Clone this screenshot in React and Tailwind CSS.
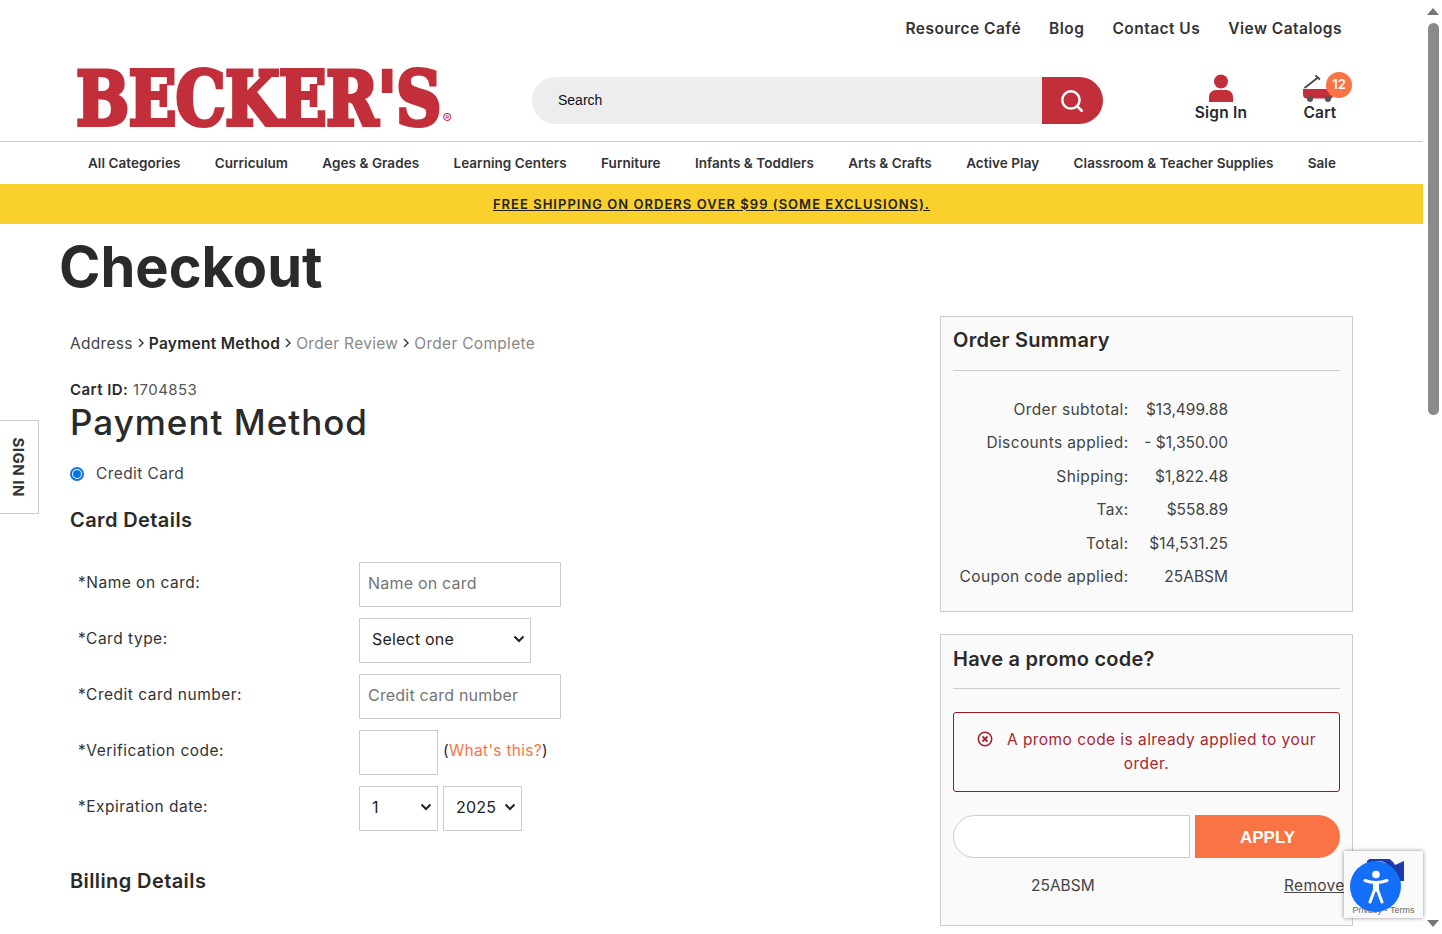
import React from "react";
import { Search } from "lucide-react";

const navItems = [
  "All Categories",
  "Curriculum",
  "Ages & Grades",
  "Learning Centers",
  "Furniture",
  "Infants & Toddlers",
  "Arts & Crafts",
  "Active Play",
  "Classroom & Teacher Supplies",
  "Sale",
];

const summary = [
  ["Order subtotal:", "$13,499.88"],
  ["Discounts applied:", "- $1,350.00"],
  ["Shipping:", "$1,822.48"],
  ["Tax:", "$558.89"],
  ["Total:", "$14,531.25"],
  ["Coupon code applied:", "25ABSM"],
];

const fieldClass =
  "h-[44.5px] border border-[#ccc] bg-white pb-[2px] text-[16px] tracking-[0.2px] text-[#222] font-['Inter',sans-serif]";

function Chevron() {
  return (
    <svg width="8" height="10" viewBox="0 0 8 10" className="mx-[4px] mb-[3px] inline-block">
      <path d="M2 1l4 4-4 4" fill="none" stroke="#333" strokeWidth="1.4" />
    </svg>
  );
}

function PersonIcon() {
  return (
    <svg width="26" height="28" viewBox="0 0 26 28">
      <circle cx="13" cy="7.5" r="7" fill="#c22f3a" />
      <path d="M1 28v-5c0-4 3-7 7-7h10c4 0 7 3 7 7v5z" fill="#c22f3a" />
    </svg>
  );
}

function WagonIcon() {
  return (
    <svg width="34" height="30" viewBox="0 0 34 30">
      <path d="M1.500 14L15 3.500" stroke="#444" strokeWidth="1.8" fill="none" />
      <path d="M12.500 1.500l4.500 4" stroke="#444" strokeWidth="1.8" fill="none" />
      <path d="M0 15h30v7c0 1.500-1 2.500-2 2.500H4c-2.500 0-4-1.500-4-4z" fill="#c22f3a" />
      <circle cx="7" cy="25" r="3" fill="#555" />
      <circle cx="25" cy="25" r="3" fill="#555" />
    </svg>
  );
}

function FormRow({ label, children }) {
  return (
    <div className="flex h-[56px] items-start">
      <label className="w-[289px] pl-2 pt-[9px] text-[15.5px] tracking-[0.5px] text-[#333]">{label}</label>
      <div className="flex items-center gap-[5px]">{children}</div>
    </div>
  );
}

function Select({ value, className }) {
  return (
    <div className={`${fieldClass} flex items-center justify-between pl-3 pr-[5px] ${className}`}>
      <span>{value}</span>
      <svg width="12" height="8" viewBox="0 0 12 8">
        <path d="M1.500 1.500L6 6l4.500-4.500" fill="none" stroke="#222" strokeWidth="2" />
      </svg>
    </div>
  );
}

export default function App() {
  return (
    <div className="relative flex h-[934px] w-[1442px] overflow-hidden bg-white font-['Inter',sans-serif] text-[#2a2a2a]">
      <main className="h-full w-[1423px] shrink-0 overflow-hidden">
        {/* TOP LINKS */}
        <div className="flex h-[60px] items-start justify-end gap-7 pr-[81px] pt-[20px] text-[15.5px] font-semibold leading-[18px] tracking-[0.47px] text-[#333]">
          <a>Resource Café</a>
          <a>Blog</a>
          <a>Contact Us</a>
          <a>View Catalogs</a>
        </div>

        {/* HEADER */}
        <div className="flex h-[82px] items-start border-b border-[#ccc]">
          <div className="relative ml-[76px] h-[72px] w-[376px] shrink-0">
            <span className="block w-[363px] origin-top-left scale-x-[0.84] whitespace-nowrap pt-[3px] font-['DejaVu_Serif',serif] text-[75px] font-bold leading-[73px] tracking-[-1px] text-[#c22f3a] [-webkit-text-stroke:4px_#c22f3a]">
              BECKER'S
            </span>
            <span className="absolute bottom-[6px] right-0 text-[14px] font-normal leading-none text-[#c22f3a]">®</span>
          </div>
          <div className="ml-[80px] mt-[17px] flex h-[47px] w-[571px] shrink-0">
            <div className="flex flex-1 items-center rounded-l-full bg-[#ededed] pl-[26px] font-['Liberation_Sans',sans-serif] text-[14px] text-[#111]">
              Search
            </div>
            <div className="flex w-[61px] items-center justify-center rounded-r-full bg-[#c22f3a] pr-[1px]">
              <Search size={26} strokeWidth={2.3} color="#fff" />
            </div>
          </div>
          <div className="ml-[89px] mt-[14px] flex w-[58px] flex-col items-center">
            <PersonIcon />
            <span className="mt-[1px] whitespace-nowrap text-[15.5px] font-semibold leading-[20px] tracking-[0.2px]">Sign In</span>
          </div>
          <div className="relative ml-[40px] mt-[14px] flex w-[60px] flex-col items-center">
            <div className="h-[29px] w-[60px] pl-[13px]">
              <WagonIcon />
            </div>
            <span className="text-[15.5px] font-semibold leading-[20px] tracking-[0.2px]">Cart</span>
            <span className="absolute -top-[2px] left-[36px] flex h-[26px] w-[26px] items-center justify-center rounded-full bg-[#f97344] text-[13px] font-semibold text-white">
              12
            </span>
          </div>
        </div>

        {/* NAV */}
        <nav className="flex h-[42px] items-center justify-between pl-[88px] pr-[87px] text-[13.5px] font-semibold tracking-[0.05px] text-[#333]">
          {navItems.map((item) => (
            <a key={item}>{item}</a>
          ))}
        </nav>

        {/* PROMO BAR */}
        <div className="flex h-[40px] items-center justify-center bg-[#fad02c] pt-[1px] text-[13px] font-semibold tracking-[1.02px] text-[#222] underline">
          FREE SHIPPING ON ORDERS OVER $99 (SOME EXCLUSIONS).
        </div>

        <h1 className="pl-[59px] pt-[9px] text-[56px] font-bold leading-[68px] text-[#2a2a2a]">Checkout</h1>

        <div className="flex pt-[15px]">
          {/* LEFT */}
          <div className="w-[940px] shrink-0 pl-[70px]">
            <div className="pt-[18px] text-[15.5px] leading-5 tracking-[0.3px]">
              <span className="text-[#444]">Address</span>
              <Chevron />
              <span className="font-semibold">Payment Method</span>
              <Chevron />
              <span className="text-[#888]">Order Review</span>
              <Chevron />
              <span className="text-[#888]">Order Complete</span>
            </div>
            <div className="mt-[26px] text-[15px] leading-5 tracking-[0.45px]">
              <b className="font-semibold">Cart ID:</b> <span className="text-[#555]">1704853</span>
            </div>
            <h2 className="mt-[2px] text-[35px] font-medium leading-[40px] tracking-[1px]">Payment Method</h2>
            <div className="mt-[22px] flex h-5 items-center text-[15.5px] tracking-[0.4px] text-[#444]">
              <span className="flex h-[14px] w-[14px] items-center justify-center rounded-full border-2 border-[#0b74e5] bg-white">
                <span className="h-[8px] w-[8px] rounded-full bg-[#0b74e5]" />
              </span>
              <span className="ml-[12px]">Credit Card</span>
            </div>
            <h3 className="mt-[24px] text-[20px] font-semibold leading-6 tracking-[0.4px]">Card Details</h3>

            <div className="mt-[30px]">
              <FormRow label="*Name on card:">
                <div className={`${fieldClass} flex w-[202px] items-center pl-2 text-[#757575]`}>Name on card</div>
              </FormRow>
              <FormRow label="*Card type:">
                <Select value="Select one" className="w-[172px]" />
              </FormRow>
              <FormRow label="*Credit card number:">
                <div className={`${fieldClass} flex w-[202px] items-center pl-2 text-[#757575]`}>Credit card number</div>
              </FormRow>
              <FormRow label="*Verification code:">
                <div className={`${fieldClass} w-[79px]`} />
                <span className="mb-[3px] text-[15.5px] tracking-[0.3px]">
                  (<span className="text-[#f97344]">What's this?</span>)
                </span>
              </FormRow>
              <FormRow label="*Expiration date:">
                <Select value="1" className="w-[79px]" />
                <Select value="2025" className="w-[79px]" />
              </FormRow>
            </div>

            <h3 className="mt-[27px] text-[20px] font-semibold leading-6 tracking-[0.4px]">Billing Details</h3>
          </div>

          {/* RIGHT */}
          <div className="w-[413px] shrink-0">
            <section className="h-[296px] border border-[#ccc] bg-[#fafafa] px-3">
              <h3 className="border-b border-[#ccc] pb-[18px] pt-[11px] text-[20px] font-semibold leading-6 tracking-[0.3px]">Order Summary</h3>
              <div className="pt-[22px]">
                {summary.map(([label, value]) => (
                  <div key={label} className="flex h-[33.4px] items-center text-[15.5px] text-[#444]">
                    <span className="w-[175.5px] whitespace-nowrap text-right tracking-[0.38px]">{label}</span>
                    <span className="w-[99.5px] whitespace-nowrap text-right">{value}</span>
                  </div>
                ))}
              </div>
            </section>

            <section className="mt-[22px] h-[292px] border border-[#ccc] bg-[#fafafa] px-3">
              <h3 className="border-b border-[#ccc] pb-[17px] pt-[12px] text-[20px] font-semibold leading-6 tracking-[0.25px]">Have a promo code?</h3>
              <div className="mt-[23px] flex h-[80px] flex-col items-center justify-center rounded-[3px] border border-[#a01520] px-2 text-center text-[15.5px] leading-[24px] tracking-[0.44px] text-[#a82632]">
                <div className="whitespace-nowrap">
                  <svg width="16" height="16" viewBox="0 0 16 16" className="mb-[3px] mr-[14px] inline-block">
                    <circle cx="8" cy="8" r="6.700" fill="none" stroke="#a82632" strokeWidth="1.600" />
                    <path d="M5.500 5.500l5 5M10.500 5.500l-5 5" stroke="#a82632" strokeWidth="1.800" />
                  </svg>
                  A promo code is already applied to your
                </div>
                <div>order.</div>
              </div>
              <div className="mt-[23px] flex h-[43px] gap-[5px]">
                <div className="w-[237px] rounded-l-full border border-[#ccc] bg-white" />
                <button className="w-[145px] rounded-r-full bg-[#f97344] pt-[2px] font-['Liberation_Sans',sans-serif] text-[17px] font-bold text-white">
                  APPLY
                </button>
              </div>
              <div className="mt-[18px] flex h-[20px] items-center text-[15.5px] text-[#444]">
                <span className="w-[331px] shrink-0 pl-[78px]">25ABSM</span>
                <span className="shrink-0 underline tracking-[0.3px]">Remove</span>
              </div>
            </section>
          </div>
        </div>
      </main>

      {/* SCROLLBAR */}
      <aside className="flex h-full w-[19px] shrink-0 flex-col items-center bg-white">
        <svg width="12" height="7" viewBox="0 0 12 7" className="mt-[8px]">
          <path d="M6 0l6 7H0z" fill="#777" />
        </svg>
        <div className="ml-[1px] mt-[8px] h-[392px] w-[11px] rounded-full bg-[#8a8a8a]" />
        <svg width="12" height="7" viewBox="0 0 12 7" className="mt-auto mb-[7px]">
          <path d="M6 7l6-7H0z" fill="#777" />
        </svg>
      </aside>

      {/* SIGN IN TAB */}
      <div className="absolute left-0 top-[420px] flex h-[94px] w-[39px] items-center justify-center border border-l-0 border-[#ccc] bg-white pr-[2px]">
        <span className="rotate-90 whitespace-nowrap text-[15px] font-bold tracking-[0.5px] text-[#333]">SIGN IN</span>
      </div>

      {/* RECAPTCHA + ACCESSIBILITY */}
      <div className="absolute left-[1344px] top-[851px] h-[67px] w-[79px] bg-[#f9f9f9] shadow-[0_0_4px_rgba(0,0,0,0.45)]">
        <svg width="40" height="30" viewBox="0 0 40 30" className="absolute left-[21px] top-[8px]">
          <path d="M2 2a18 18 0 0 1 28 4l9-4v20H18l8-8A12 12 0 0 0 2 14z" fill="#1c3aa9" />
        </svg>
        <div className="absolute bottom-[3px] left-0 w-full text-center font-['Liberation_Sans',sans-serif] text-[9px] leading-[10px] text-[#666]">
          Privacy - Terms
        </div>
      </div>
      <div className="absolute left-[1350px] top-[861px] flex h-[51px] w-[51px] items-center justify-center rounded-full bg-[#146ff8]">
        <svg width="26" height="34" viewBox="0 0 26 34">
          <circle cx="13" cy="4.500" r="3.800" fill="#fff" />
          <path d="M2 10.500c4 1.500 7 2 11 2s7-.5 11-2" fill="none" stroke="#fff" strokeWidth="3" strokeLinecap="round" />
          <path d="M10 12.500h6v9h-6z" fill="#fff" />
          <path d="M11.500 20L7 32M14.500 20l4.500 12" fill="none" stroke="#fff" strokeWidth="3" strokeLinecap="round" />
        </svg>
      </div>
    </div>
  );
}
